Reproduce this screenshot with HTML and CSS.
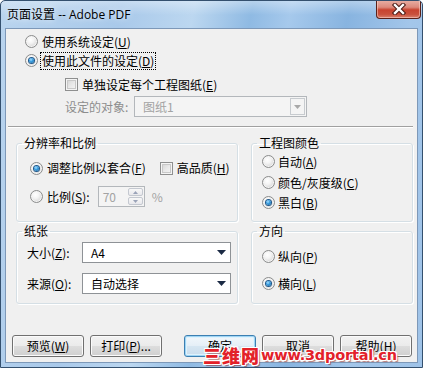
FILE: index.html
```html
<!DOCTYPE html>
<html lang="zh-CN">
<head>
<meta charset="utf-8">
<title>页面设置 -- Adobe PDF</title>
<link rel="stylesheet" href="styles.css">
</head>
<body>
<div class="window">
  <div class="titlebar">
    <span class="title">页面设置<span class="latin"> -- Adobe PDF</span></span>
    <div class="close">
      <svg width="16" height="12" viewBox="0 0 16 12"><path d="M4 2 L12 10 M12 2 L4 10" stroke="#4a1a14" stroke-width="4.4" stroke-linecap="square"/><path d="M4 2 L12 10 M12 2 L4 10" stroke="#ffffff" stroke-width="2.4" stroke-linecap="square"/></svg>
    </div>
  </div>
  <div class="client">
    <div class="top">
      <div class="row"><span class="radio"></span><span class="lbl">使用系统设定(<u>U</u>)</span></div>
      <div class="row"><span class="radio on"></span><span class="lbl focus">使用此文件的设定(<u>D</u>)</span></div>
      <div class="row indent r3"><span class="check"></span><span class="lbl">单独设定每个工程图纸(<u>E</u>)</span></div>
      <div class="row indent r4">
        <span class="dis-text">设定的对象:</span>
        <div class="combo target disabled"><span class="cval">图纸1</span><span class="cbtn"><svg width="7" height="4" viewBox="0 0 7 4"><path d="M0 0 H7 L3.5 4 Z" fill="#a8a8a8"/></svg></span></div>
      </div>
    </div>
    <div class="sep"></div>
    <div class="grow grow1">
      <fieldset class="g g-left">
        <legend>分辨率和比例</legend>
        <div class="gin">
          <div class="row fit"><span class="radio on"></span><span class="lbl">调整比例以套合(<u>F</u>)</span><span class="check hq"></span><span class="lbl">高品质(<u>H</u>)</span></div>
          <div class="row scale"><span class="radio"></span><span class="lbl">比例(<u>S</u>):</span>
            <div class="spin"><span class="sval">70</span><span class="sbtns"><span class="sb"><svg width="5" height="3" viewBox="0 0 5 3"><path d="M0 3 H5 L2.5 0 Z" fill="#9aa3b8"/></svg></span><span class="sb"><svg width="5" height="3" viewBox="0 0 5 3"><path d="M0 0 H5 L2.5 3 Z" fill="#9aa3b8"/></svg></span></span></div>
            <span class="pct">%</span>
          </div>
        </div>
      </fieldset>
      <fieldset class="g g-right">
        <legend>工程图颜色</legend>
        <div class="gin color">
          <div class="row c1"><span class="radio"></span><span class="lbl">自动(<u>A</u>)</span></div>
          <div class="row c2"><span class="radio"></span><span class="lbl">颜色/灰度级(<u>C</u>)</span></div>
          <div class="row c3"><span class="radio on"></span><span class="lbl">黑白(<u>B</u>)</span></div>
        </div>
      </fieldset>
    </div>
    <div class="grow grow2">
      <fieldset class="g g-left paper">
        <legend>纸张</legend>
        <div class="gin">
          <div class="row prow p1"><span class="plbl">大小(<u>Z</u>):</span><div class="combo pcombo"><span class="cval">A4</span><span class="arrow"><svg width="9" height="5" viewBox="0 0 9 5"><path d="M0 0 H9 L4.5 5 Z" fill="#1b2a44"/></svg></span></div></div>
          <div class="row prow p2"><span class="plbl">来源(<u>O</u>):</span><div class="combo pcombo"><span class="cval">自动选择</span><span class="arrow"><svg width="9" height="5" viewBox="0 0 9 5"><path d="M0 0 H9 L4.5 5 Z" fill="#1b2a44"/></svg></span></div></div>
        </div>
      </fieldset>
      <fieldset class="g g-right orient">
        <legend>方向</legend>
        <div class="gin color">
          <div class="row o1"><span class="radio"></span><span class="lbl">纵向(<u>P</u>)</span></div>
          <div class="row o2"><span class="radio on"></span><span class="lbl">横向(<u>L</u>)</span></div>
        </div>
      </fieldset>
    </div>
    <div class="buttons">
      <div class="bgroup">
        <button class="btn">预览(<u>W</u>)</button>
        <button class="btn">打印(<u>P</u>)...</button>
      </div>
      <div class="bgroup">
        <button class="btn default">确定</button>
        <button class="btn">取消</button>
        <button class="btn">帮助(<u>H</u>)</button>
      </div>
    </div>
  </div>
  <div class="watermark"><span class="wm-cn">三维网</span><span class="wm-en">www.3dportal.cn</span></div>
</div>
</body>
</html>
```

FILE: styles.css
```css
* { box-sizing: border-box; }
html, body { margin: 0; padding: 0; }
body {
  width: 423px;
  height: 368px;
  overflow: hidden;
  font-family: "Noto Sans CJK SC", "Noto Sans", sans-serif;
  font-size: 12px;
  line-height: 16px;
  color: #000;
  background: #fff;
}
u { text-decoration: underline; text-underline-offset: 1px; }

.window {
  position: relative;
  width: 423px;
  height: 368px;
  overflow: hidden;
  border: 1px solid #34506e;
  border-radius: 5px 5px 0 0;
  padding: 0 4px 4px 4px;
  background:
    linear-gradient(180deg, rgba(255,255,255,0.35) 0px, rgba(255,255,255,0) 14px),
    linear-gradient(100deg, #b9d4ee 0%, #a9c9ea 25%, #bcd7f0 40%, #8fbae3 52%, #a6c9ec 60%, #88b4e0 72%, #a3c6ea 85%, #9fc3e8 100%);
  display: flex;
  flex-direction: column;
}

.titlebar {
  height: 27px;
  flex: none;
  display: flex;
  justify-content: space-between;
  align-items: flex-start;
}
.title {
  margin: 5px 0 0 2px;
  font-size: 12px;
  line-height: 16px;
  color: #000;
  text-shadow: 0 0 6px rgba(255,255,255,0.9);
}
.latin { font-family: "Open Sans", sans-serif; font-size: 12px; }
.close {
  width: 45px;
  height: 19px;
  margin-top: -1px;
  margin-right: -3px;
  border: 1px solid #5a2018;
  border-top: none;
  border-radius: 0 0 4px 4px;
  background: linear-gradient(180deg, #e9b1a6 0%, #dc8a7c 40%, #c8432f 55%, #c9513c 80%, #d9826f 100%);
  box-shadow: inset 0 0 0 1px rgba(255,220,210,0.5);
  display: flex;
  align-items: center;
  justify-content: center;
}

.client {
  flex: 1;
  background: #f0f0f0;
  border: 1px solid #7d98b8;
  display: flex;
  flex-direction: column;
}

.row {
  display: flex;
  align-items: center;
  height: 19px;
  white-space: nowrap;
}
.lbl { margin-left: 4px; }
.focus { outline: 1px dotted #000; outline-offset: 0; padding: 0 1px; margin-left: 3px; }

.radio {
  flex: none;
  width: 13px;
  height: 13px;
  border-radius: 50%;
  border: 1px solid #8b8c8c;
  background: radial-gradient(circle at 40% 35%, #ffffff 0%, #f4f4f4 35%, #d4d4d4 80%, #c6c6c6 100%);
  box-shadow: inset 0 0 0 1px #f4f4f4;
  position: relative;
}
.radio.on::after {
  content: "";
  position: absolute;
  left: 3px;
  top: 3px;
  width: 5px;
  height: 5px;
  border-radius: 50%;
  background: radial-gradient(circle at 40% 35%, #a8e0ff 0%, #3b9ee0 40%, #14609a 100%);
  box-shadow: 0 0 0 1px #21588a;
}
.check {
  flex: none;
  width: 13px;
  height: 13px;
  border: 1px solid #8e8f8f;
  background: linear-gradient(135deg, #cfcfcf 0%, #e8e8e8 50%, #f8f8f8 100%);
  box-shadow: inset 0 0 0 1px #f4f4f4, inset 0 0 0 2px #c8c8c8;
}

/* top section */
.top {
  padding: 3px 0 0 19px;
  display: flex;
  flex-direction: column;
}
.indent { padding-left: 40px; }
.r3 { margin-top: 5px; }
.r3 .lbl { margin-left: 4px; }
.r4 { margin-top: 2px; height: 21px; }
.dis-text { color: #8d8d8d; width: 69px; }
.combo {
  display: flex;
  align-items: center;
  height: 21px;
  border: 1px solid #8e9296;
  background: #fff;
  position: relative;
}
.combo.target {
  width: 173px;
  background: #f4f4f4;
  border-color: #b3b7bb;
  color: #a3a3a3;
}
.cval { padding-left: 8px; flex: 1; }
.cbtn {
  width: 15px;
  height: 17px;
  margin-right: 1px;
  border: 1px solid #c7cbcf;
  background: #f4f4f4;
  display: flex;
  align-items: center;
  justify-content: center;
}

.sep {
  margin: 9px 4px 0 2px;
  height: 2px;
  border-top: 1px solid #a0a0a0;
  border-bottom: 1px solid #ffffff;
}

/* groups */
.grow {
  display: flex;
  gap: 13px;
  padding-left: 10px;
}
.grow1 { margin-top: 7px; }
.grow2 { margin-top: 1px; }
.g {
  margin: 0;
  padding: 0 0 0 5px;
  border: 1px solid #d5dfe5;
  border-radius: 3px;
  box-shadow: inset 1px 1px 0 #ffffff, 1px 1px 0 #ffffff;
  min-inline-size: 0;
}
.g legend {
  padding: 0 2px;
  line-height: 16px;
  font-size: 12px;
}
.g-left { width: 222px; }
.g-right { width: 162px; }
.grow1 .g { height: 87px; }
.grow2 .g { height: 81px; }

.gin { display: flex; flex-direction: column; }
.fit { margin-top: 7px; margin-left: 8px; height: 20px; }
.hq { margin-left: 14px; }
.scale { margin-top: 8px; margin-left: 8px; height: 21px; }
.spin {
  margin-left: 8px;
  width: 47px;
  height: 21px;
  border: 1px solid #b3b7bb;
  background: #f4f4f4;
  display: flex;
  align-items: stretch;
}
.sval { flex: 1; color: #a3a3a3; padding-left: 4px; line-height: 19px; }
.sbtns {
  width: 16px;
  display: flex;
  flex-direction: column;
  padding: 1px 1px 1px 0;
  gap: 1px;
}
.sb {
  flex: 1;
  border: 1px solid #c4c8d0;
  border-radius: 2px;
  background: linear-gradient(#f8f8f8, #e8e8ec);
  display: flex;
  align-items: center;
  justify-content: center;
}
.pct { margin-left: 7px; color: #a3a3a3; }

.color { padding-left: 5px; }
.c1 { margin-top: 1px; }
.c2 { margin-top: 2px; }
.c3 { margin-top: 1px; }
.c1 .lbl, .c2 .lbl, .c3 .lbl, .o1 .lbl, .o2 .lbl { margin-left: 3px; }

.paper .gin { padding-left: 5px; }
.prow { height: 21px; }
.p1 { margin-top: 3px; }
.p2 { margin-top: 10px; }
.plbl { width: 55px; }
.pcombo { width: 149px; }
.arrow { width: 18px; display: flex; justify-content: center; align-items: center; }

.o1 { margin-top: 8px; }
.o2 { margin-top: 8px; }

/* buttons */
.buttons {
  margin-top: 31px;
  display: flex;
  justify-content: space-between;
  padding: 0 5px 0 6px;
}
.bgroup { display: flex; gap: 6px; }
.btn {
  width: 72px;
  height: 22px;
  padding: 0;
  font-family: "Noto Sans CJK SC", "Noto Sans", sans-serif;
  font-size: 12px;
  line-height: 16px;
  color: #000;
  border: 1px solid #707070;
  border-radius: 3px;
  background: linear-gradient(180deg, #f2f2f2 0%, #ebebeb 48%, #dddddd 52%, #cfcfcf 100%);
  box-shadow: inset 0 0 0 1px #fbfbfb;
}
.btn.default {
  border-color: #3c7fb1;
  background: linear-gradient(180deg, #f2f7fb 0%, #e5eff7 48%, #d6e6f2 52%, #c9dcec 100%);
  box-shadow: inset 0 0 0 1px #9fd5f5, inset 0 0 0 2px #dff2fc;
}

/* watermark overlay */
.watermark {
  position: absolute;
  left: 202px;
  top: 346px;
  display: flex;
  align-items: center;
  white-space: nowrap;
  color: #e3212a;
  text-shadow:
    1px 0 0 #fff, -1px 0 0 #fff, 0 1px 0 #fff, 0 -1px 0 #fff,
    1px 1px 0 #fff, -1px -1px 0 #fff, 1px -1px 0 #fff, -1px 1px 0 #fff,
    2px 2px 1px rgba(120,0,0,0.5);
}
.wm-cn {
  font-family: "Noto Sans CJK SC", sans-serif;
  font-weight: 900;
  font-size: 18px;
  line-height: 17px;
  letter-spacing: 1px;
}
.wm-en {
  font-family: "DejaVu Sans", sans-serif;
  font-weight: bold;
  font-size: 14.5px;
  line-height: 17px;
  letter-spacing: -0.2px;
  margin-left: 1px;
}
```
